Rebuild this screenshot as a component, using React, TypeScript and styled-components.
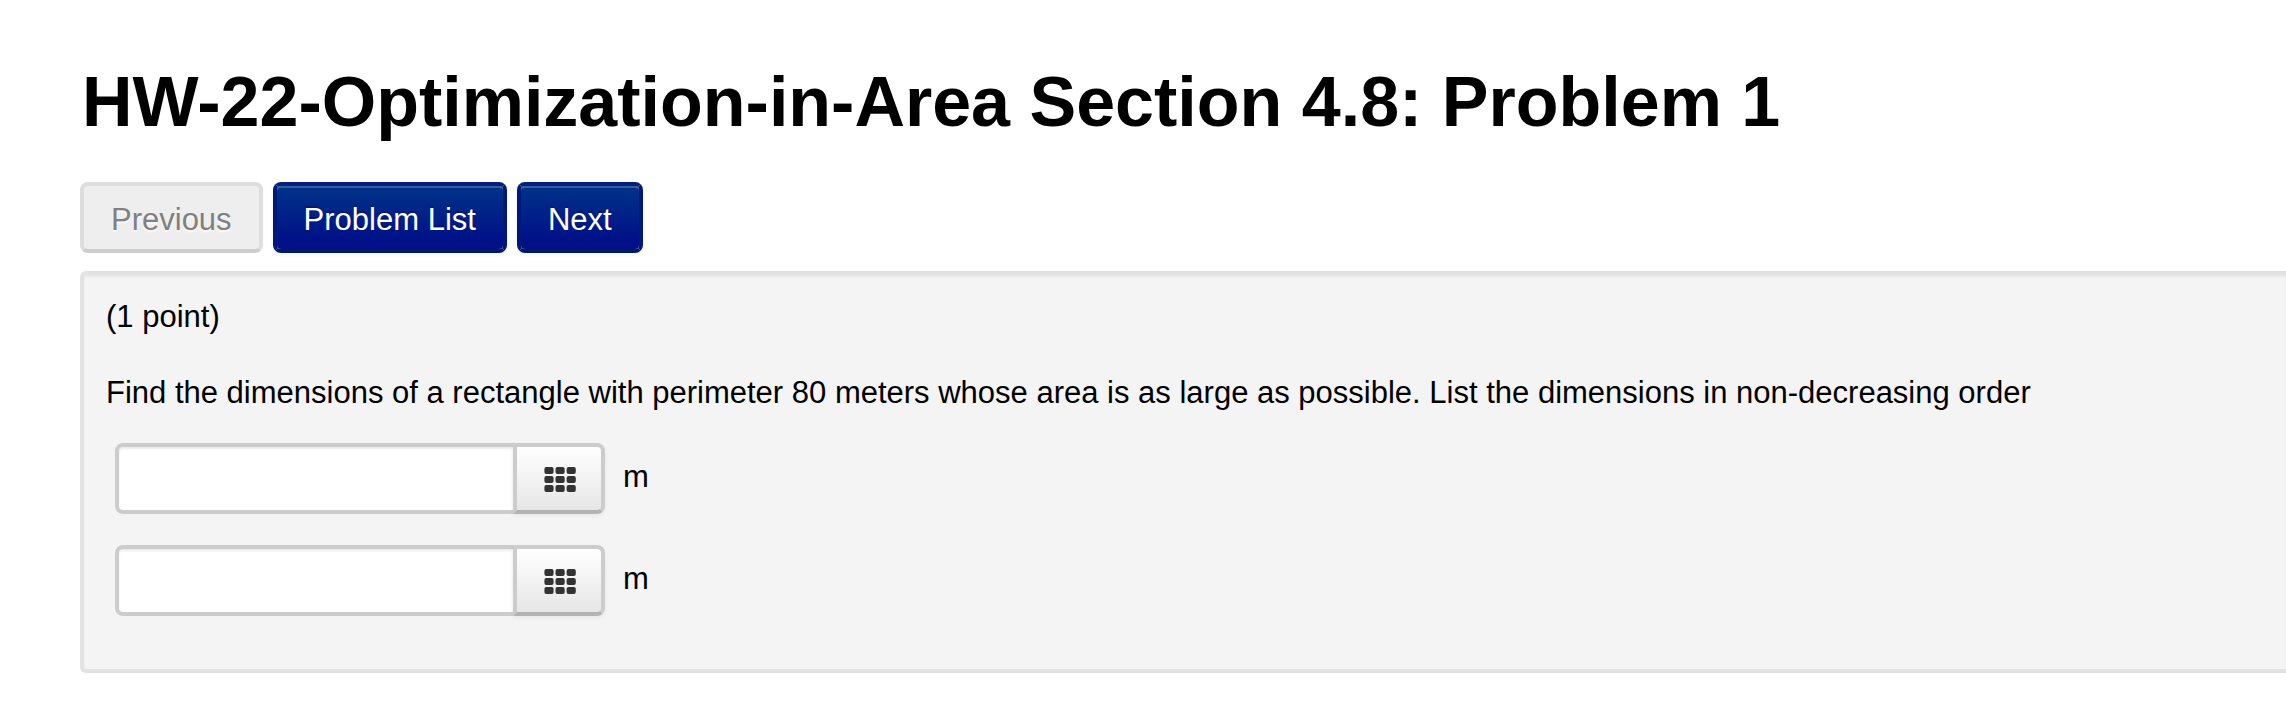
import React from "react";
import styled, { createGlobalStyle, css } from "styled-components";

const GlobalStyle = createGlobalStyle`
  *, *::before, *::after { box-sizing: border-box; }
  body {
    margin: 0;
    background: #fff;
    color: #000;
    font-family: "Liberation Sans", Arial, sans-serif;
    font-size: 31px;
    line-height: 40px;
  }
`;

const Page = styled.main`
  padding: 62px 0 40px 80px;
`;

const Title = styled.h1`
  margin: 0;
  padding: 0 2px 40px;
  font-size: 70px;
  line-height: 80px;
  font-weight: 700;
`;

const Nav = styled.nav`
  display: flex;
  gap: 10px;
  padding-bottom: 18px;
`;

const NavButton = styled.button<{ $primary?: boolean }>`
  height: 71px;
  padding: 5px 27px 0;
  border: 4px solid;
  border-radius: 8px;
  font: inherit;
  line-height: 40px;
  ${({ $primary }) =>
    $primary
      ? css`
          color: #fff;
          border-color: #00207a #00187a #001a62;
          background: linear-gradient(#038, #001188 85%) padding-box;
          text-shadow: 0 -2px 0 rgba(0, 0, 0, 0.25);
          box-shadow:
            inset 0 2px 0 rgba(255, 255, 255, 0.2),
            0 2px 4px rgba(0, 0, 0, 0.05);
        `
      : css`
          color: #808080;
          border-color: #dedede #dedede #cdcdcd;
          background: #eee;
          text-shadow: 0 2px 2px rgba(255, 255, 255, 0.75);
        `}
`;

const Problem = styled.section`
  padding: 22px 22px 53px;
  border: 4px solid #e2e2e2;
  border-right: 0;
  border-radius: 6px 0 0 6px;
  background: #f4f4f4;
  box-shadow: inset 0 2px 2px rgba(0, 0, 0, 0.05);
`;

const Points = styled.p`
  margin: 0 0 36px;
`;

const Question = styled.p`
  margin: 0 0 30px;
`;

const Answers = styled.div`
  display: flex;
  flex-direction: column;
  gap: 31px;
  padding-left: 9px;
`;

const AnswerRow = styled.div`
  display: flex;
  align-items: center;
  gap: 18px;
`;

const InputGroup = styled.div`
  display: flex;
`;

const AnswerInput = styled.input`
  width: 402px;
  height: 71px;
  padding: 8px 12px;
  border: 4px solid #ccc;
  border-radius: 8px 0 0 8px;
  background: #fff;
  box-shadow: inset 0 2px 2px rgba(0, 0, 0, 0.075);
  font: inherit;
`;

const PadButton = styled.button`
  display: flex;
  align-items: center;
  justify-content: center;
  width: 92px;
  height: 71px;
  margin-left: -4px;
  padding: 2px 0 0 2px;
  border: 4px solid #ccc;
  border-bottom-color: #b3b3b3;
  border-radius: 0 8px 8px 0;
  background: linear-gradient(#fff, #e6e6e6);
  box-shadow: 0 2px 4px rgba(0, 0, 0, 0.05);
`;

const Unit = styled.label`
  padding-bottom: 4px;
`;

const PadIcon = () => (
  <svg width="32" height="25" viewBox="0 0 32 25" fill="#333" aria-hidden="true">
    {[0, 9, 18].map((y) =>
      [0.4, 11.5, 22.6].map((x) => (
        <rect key={`${x}-${y}`} x={x} y={y} width="9.2" height="7" rx="2" />
      )),
    )}
  </svg>
);

const answers = ["answer-1", "answer-2"];

export default function App() {
  return (
    <>
      <GlobalStyle />
      <Page>
        <Title>HW-22-Optimization-in-Area Section 4.8: Problem 1</Title>
        <Nav>
          <NavButton type="button" disabled>
            Previous
          </NavButton>
          <NavButton type="button" $primary>
            Problem List
          </NavButton>
          <NavButton type="button" $primary>
            Next
          </NavButton>
        </Nav>
        <Problem>
          <Points>(1 point)</Points>
          <Question>
            Find the dimensions of a rectangle with perimeter 80 meters whose area is as large as
            possible. List the dimensions in non-decreasing order
          </Question>
          <Answers>
            {answers.map((id) => (
              <AnswerRow key={id}>
                <InputGroup>
                  <AnswerInput id={id} type="text" />
                  <PadButton type="button" aria-label="Open equation editor">
                    <PadIcon />
                  </PadButton>
                </InputGroup>
                <Unit htmlFor={id}>m</Unit>
              </AnswerRow>
            ))}
          </Answers>
        </Problem>
      </Page>
    </>
  );
}
